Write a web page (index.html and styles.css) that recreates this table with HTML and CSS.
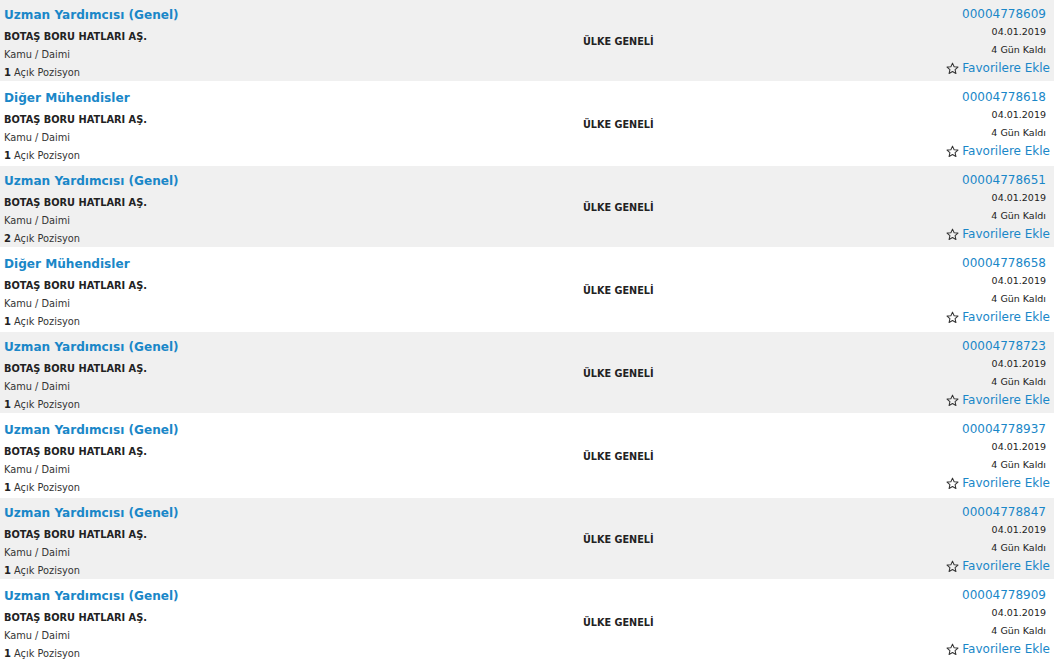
FILE: index.html
```html
<!DOCTYPE html>
<html lang="tr">
<head>
<meta charset="utf-8">
<title>İlanlar</title>
<link rel="stylesheet" href="styles.css">
</head>
<body>
<div class="list">
  <div class="row alt">
    <div class="col-left">
      <a class="title" href="#">Uzman Yardımcısı (Genel)</a>
      <div class="company">BOTAŞ BORU HATLARI AŞ.</div>
      <div class="meta">Kamu / Daimi</div>
      <div class="meta"><b>1</b> Açık Pozisyon</div>
    </div>
    <div class="col-mid">ÜLKE GENELİ</div>
    <div class="col-right">
      <a class="num" href="#">00004778609</a>
      <div class="small">04.01.2019</div>
      <div class="small">4 Gün Kaldı</div>
      <a class="fav" href="#"><svg class="star" viewBox="0 0 14 14"><path d="M7 1.2l1.75 3.9 4.15.4-3.12 2.8.92 4.1L7 10.3l-3.7 2.1.92-4.1L1.1 5.5l4.15-.4z"/></svg>Favorilere Ekle</a>
    </div>
  </div>
  <div class="row">
    <div class="col-left">
      <a class="title" href="#">Diğer Mühendisler</a>
      <div class="company">BOTAŞ BORU HATLARI AŞ.</div>
      <div class="meta">Kamu / Daimi</div>
      <div class="meta"><b>1</b> Açık Pozisyon</div>
    </div>
    <div class="col-mid">ÜLKE GENELİ</div>
    <div class="col-right">
      <a class="num" href="#">00004778618</a>
      <div class="small">04.01.2019</div>
      <div class="small">4 Gün Kaldı</div>
      <a class="fav" href="#"><svg class="star" viewBox="0 0 14 14"><path d="M7 1.2l1.75 3.9 4.15.4-3.12 2.8.92 4.1L7 10.3l-3.7 2.1.92-4.1L1.1 5.5l4.15-.4z"/></svg>Favorilere Ekle</a>
    </div>
  </div>
  <div class="row alt">
    <div class="col-left">
      <a class="title" href="#">Uzman Yardımcısı (Genel)</a>
      <div class="company">BOTAŞ BORU HATLARI AŞ.</div>
      <div class="meta">Kamu / Daimi</div>
      <div class="meta"><b>2</b> Açık Pozisyon</div>
    </div>
    <div class="col-mid">ÜLKE GENELİ</div>
    <div class="col-right">
      <a class="num" href="#">00004778651</a>
      <div class="small">04.01.2019</div>
      <div class="small">4 Gün Kaldı</div>
      <a class="fav" href="#"><svg class="star" viewBox="0 0 14 14"><path d="M7 1.2l1.75 3.9 4.15.4-3.12 2.8.92 4.1L7 10.3l-3.7 2.1.92-4.1L1.1 5.5l4.15-.4z"/></svg>Favorilere Ekle</a>
    </div>
  </div>
  <div class="row">
    <div class="col-left">
      <a class="title" href="#">Diğer Mühendisler</a>
      <div class="company">BOTAŞ BORU HATLARI AŞ.</div>
      <div class="meta">Kamu / Daimi</div>
      <div class="meta"><b>1</b> Açık Pozisyon</div>
    </div>
    <div class="col-mid">ÜLKE GENELİ</div>
    <div class="col-right">
      <a class="num" href="#">00004778658</a>
      <div class="small">04.01.2019</div>
      <div class="small">4 Gün Kaldı</div>
      <a class="fav" href="#"><svg class="star" viewBox="0 0 14 14"><path d="M7 1.2l1.75 3.9 4.15.4-3.12 2.8.92 4.1L7 10.3l-3.7 2.1.92-4.1L1.1 5.5l4.15-.4z"/></svg>Favorilere Ekle</a>
    </div>
  </div>
  <div class="row alt">
    <div class="col-left">
      <a class="title" href="#">Uzman Yardımcısı (Genel)</a>
      <div class="company">BOTAŞ BORU HATLARI AŞ.</div>
      <div class="meta">Kamu / Daimi</div>
      <div class="meta"><b>1</b> Açık Pozisyon</div>
    </div>
    <div class="col-mid">ÜLKE GENELİ</div>
    <div class="col-right">
      <a class="num" href="#">00004778723</a>
      <div class="small">04.01.2019</div>
      <div class="small">4 Gün Kaldı</div>
      <a class="fav" href="#"><svg class="star" viewBox="0 0 14 14"><path d="M7 1.2l1.75 3.9 4.15.4-3.12 2.8.92 4.1L7 10.3l-3.7 2.1.92-4.1L1.1 5.5l4.15-.4z"/></svg>Favorilere Ekle</a>
    </div>
  </div>
  <div class="row">
    <div class="col-left">
      <a class="title" href="#">Uzman Yardımcısı (Genel)</a>
      <div class="company">BOTAŞ BORU HATLARI AŞ.</div>
      <div class="meta">Kamu / Daimi</div>
      <div class="meta"><b>1</b> Açık Pozisyon</div>
    </div>
    <div class="col-mid">ÜLKE GENELİ</div>
    <div class="col-right">
      <a class="num" href="#">00004778937</a>
      <div class="small">04.01.2019</div>
      <div class="small">4 Gün Kaldı</div>
      <a class="fav" href="#"><svg class="star" viewBox="0 0 14 14"><path d="M7 1.2l1.75 3.9 4.15.4-3.12 2.8.92 4.1L7 10.3l-3.7 2.1.92-4.1L1.1 5.5l4.15-.4z"/></svg>Favorilere Ekle</a>
    </div>
  </div>
  <div class="row alt">
    <div class="col-left">
      <a class="title" href="#">Uzman Yardımcısı (Genel)</a>
      <div class="company">BOTAŞ BORU HATLARI AŞ.</div>
      <div class="meta">Kamu / Daimi</div>
      <div class="meta"><b>1</b> Açık Pozisyon</div>
    </div>
    <div class="col-mid">ÜLKE GENELİ</div>
    <div class="col-right">
      <a class="num" href="#">00004778847</a>
      <div class="small">04.01.2019</div>
      <div class="small">4 Gün Kaldı</div>
      <a class="fav" href="#"><svg class="star" viewBox="0 0 14 14"><path d="M7 1.2l1.75 3.9 4.15.4-3.12 2.8.92 4.1L7 10.3l-3.7 2.1.92-4.1L1.1 5.5l4.15-.4z"/></svg>Favorilere Ekle</a>
    </div>
  </div>
  <div class="row">
    <div class="col-left">
      <a class="title" href="#">Uzman Yardımcısı (Genel)</a>
      <div class="company">BOTAŞ BORU HATLARI AŞ.</div>
      <div class="meta">Kamu / Daimi</div>
      <div class="meta"><b>1</b> Açık Pozisyon</div>
    </div>
    <div class="col-mid">ÜLKE GENELİ</div>
    <div class="col-right">
      <a class="num" href="#">00004778909</a>
      <div class="small">04.01.2019</div>
      <div class="small">4 Gün Kaldı</div>
      <a class="fav" href="#"><svg class="star" viewBox="0 0 14 14"><path d="M7 1.2l1.75 3.9 4.15.4-3.12 2.8.92 4.1L7 10.3l-3.7 2.1.92-4.1L1.1 5.5l4.15-.4z"/></svg>Favorilere Ekle</a>
    </div>
  </div>
</div>
</body>
</html>
```

FILE: styles.css
```css
html, body {
  margin: 0;
  padding: 0;
  background: #ffffff;
}
body {
  font-family: "DejaVu Sans", Verdana, sans-serif;
  color: #333333;
  overflow: hidden;
}
a {
  text-decoration: none;
}
.list {
  display: flex;
  flex-direction: column;
}
.row {
  display: grid;
  grid-template-columns: 583px 1fr auto;
  height: 83px;
  box-sizing: border-box;
  border-bottom: 2px solid #ffffff;
}
.row.alt {
  background: #f0f0f0;
}
.col-left {
  display: flex;
  flex-direction: column;
  padding: 6px 0 0 4px;
}
.title {
  color: #1a87c8;
  font-weight: bold;
  font-size: 12.1px;
  line-height: 18px;
}
.company {
  margin-top: 4px;
  font-weight: bold;
  font-size: 9.8px;
  line-height: 18px;
  color: #222222;
}
.meta {
  font-size: 9.8px;
  line-height: 18px;
  color: #333333;
}
.meta b {
  font-size: 10px;
  color: #222222;
}
.col-mid {
  align-self: center;
  font-weight: bold;
  font-size: 9.7px;
  color: #222222;
}
.col-right {
  display: flex;
  flex-direction: column;
  align-items: flex-end;
  padding: 5px 4px 0 0;
}
.num {
  color: #1a87c8;
  font-size: 12px;
  line-height: 18px;
  margin-right: 4px;
}
.small {
  font-size: 9.5px;
  line-height: 18px;
  color: #222222;
  margin-right: 4px;
}
.fav {
  display: flex;
  align-items: center;
  gap: 3px;
  color: #1a87c8;
  font-size: 12px;
  line-height: 18px;
}
.star {
  width: 13px;
  height: 13px;
  fill: none;
  stroke: #333333;
  stroke-width: 1.1;
  stroke-linejoin: round;
}
```
